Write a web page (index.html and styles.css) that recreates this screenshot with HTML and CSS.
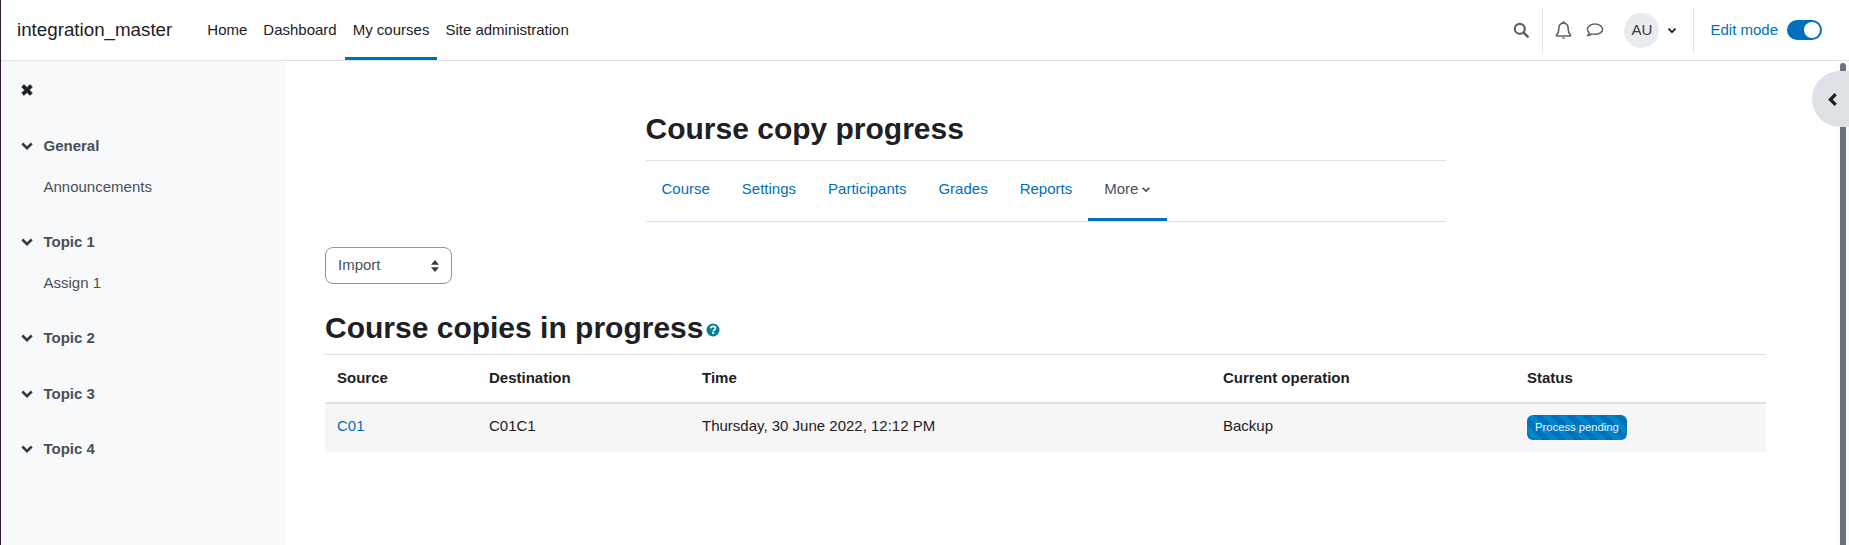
FILE: index.html
```html
<!DOCTYPE html>
<html lang="en">
<head>
<meta charset="utf-8">
<title>Course copy progress</title>
<link rel="stylesheet" href="styles.css">
</head>
<body>
<header class="navbar">
  <a class="brand">integration_master</a>
  <nav class="primary">
    <a class="primary-link">Home</a>
    <a class="primary-link">Dashboard</a>
    <a class="primary-link active">My courses</a>
    <a class="primary-link">Site administration</a>
  </nav>
  <div class="usernav">
    <svg class="ico-search" viewBox="0 0 16 16"><circle cx="6.800" cy="6.800" r="5" fill="none" stroke="currentColor" stroke-width="2.200"/><path d="M10.500 10.500 14.600 14.600" stroke="currentColor" stroke-width="2.600" stroke-linecap="round"/></svg>
    <span class="divider search-div"></span>
    <svg class="ico-bell" viewBox="0 0 16 18"><path d="M8 2.200c-2.800 0-4.400 2-4.400 4.800 0 3.400-.8 4.800-2.200 6.300-.3.4 0 .9.4.9h12.400c.4 0 .7-.5.4-.9-1.400-1.500-2.200-2.900-2.200-6.300C12.400 4.200 10.800 2.200 8 2.200Z" fill="none" stroke="currentColor" stroke-width="1.500"/><path d="M6.200 15.600c.3.900 1 1.300 1.800 1.300s1.500-.4 1.800-1.300Z" fill="currentColor"/><circle cx="8" cy="1.500" r="1.200" fill="currentColor"/></svg>
    <svg class="ico-msg" viewBox="0 0 18 16"><path d="M9 2C4.800 2 1.400 4.300 1.400 7.200c0 1.300.7 2.500 1.800 3.400-.1 1-.7 2-1.600 3 1.700-.1 3.200-.8 4.300-1.700.9.300 2 .4 3.100.4 4.200 0 7.600-2.300 7.600-5.100S13.200 2 9 2Z" fill="none" stroke="currentColor" stroke-width="1.500" stroke-linejoin="round"/></svg>
    <span class="avatar">AU</span>
    <svg class="ico-caret" viewBox="0 0 12 8"><path d="M1.800 1.800 6 6l4.200-4.200" fill="none" stroke="currentColor" stroke-width="2.200"/></svg>
    <span class="divider edit-div"></span>
    <span class="edit-label">Edit mode</span>
    <span class="toggle"><span class="knob"></span></span>
  </div>
</header>

<div class="layout">
  <aside class="sidebar">
    <svg class="ico-close" viewBox="0 0 12 12"><path d="M3 .6 6 3.600 9 .6 11.400 3 8.400 6 11.400 9 9 11.400 6 8.400 3 11.400.6 9 3.600 6 .6 3Z" fill="#1d2125" stroke="#1d2125" stroke-width=".6" stroke-linejoin="round"/></svg>
    <section class="sec sec-first">
      <div class="sec-head"><svg class="chev" viewBox="0 0 12 8"><path d="M1.300 1.500 6 6.200l4.700-4.700" fill="none" stroke="currentColor" stroke-width="2.500"/></svg>General</div>
      <div class="sec-item">Announcements</div>
    </section>
    <section class="sec">
      <div class="sec-head"><svg class="chev" viewBox="0 0 12 8"><path d="M1.300 1.500 6 6.200l4.700-4.700" fill="none" stroke="currentColor" stroke-width="2.500"/></svg>Topic 1</div>
      <div class="sec-item">Assign 1</div>
    </section>
    <section class="sec">
      <div class="sec-head"><svg class="chev" viewBox="0 0 12 8"><path d="M1.300 1.500 6 6.200l4.700-4.700" fill="none" stroke="currentColor" stroke-width="2.500"/></svg>Topic 2</div>
    </section>
    <section class="sec">
      <div class="sec-head"><svg class="chev" viewBox="0 0 12 8"><path d="M1.300 1.500 6 6.200l4.700-4.700" fill="none" stroke="currentColor" stroke-width="2.500"/></svg>Topic 3</div>
    </section>
    <section class="sec">
      <div class="sec-head"><svg class="chev" viewBox="0 0 12 8"><path d="M1.300 1.500 6 6.200l4.700-4.700" fill="none" stroke="currentColor" stroke-width="2.500"/></svg>Topic 4</div>
    </section>
  </aside>

  <main class="main">
    <div class="page-head">
      <h1 class="page-title">Course copy progress</h1>
      <nav class="tabs">
        <a class="tab">Course</a>
        <a class="tab">Settings</a>
        <a class="tab">Participants</a>
        <a class="tab">Grades</a>
        <a class="tab">Reports</a>
        <a class="tab tab-active">More<svg class="tab-caret" viewBox="0 0 12 8"><path d="M2 2l4 4 4-4" fill="none" stroke="currentColor" stroke-width="2"/></svg></a>
      </nav>
    </div>
    <div class="select">Import<svg class="updown" viewBox="0 0 8 12"><path d="M4 0 8 4.800H0ZM4 12 0 7.200h8Z" fill="#343a40"/></svg></div>
    <h2 class="sub-title">Course copies in progress<svg class="help" viewBox="0 0 14 14"><circle cx="7" cy="7" r="6.500" fill="#008196"/><path d="M4.700 5.300C4.900 4 5.900 3.400 7.100 3.400c1.300 0 2.300.8 2.300 2 0 1.700-2.200 1.600-2.200 3" fill="none" stroke="#fff" stroke-width="1.700"/><rect x="6.200" y="9.200" width="2" height="1.800" fill="#fff"/></svg></h2>
    <table class="copies">
      <colgroup>
        <col class="c-source"><col class="c-dest"><col class="c-time"><col class="c-op"><col class="c-status">
      </colgroup>
      <thead>
        <tr><th>Source</th><th>Destination</th><th>Time</th><th>Current operation</th><th>Status</th></tr>
      </thead>
      <tbody>
        <tr><td><a class="link">C01</a></td><td>C01C1</td><td>Thursday, 30 June 2022, 12:12 PM</td><td>Backup</td><td><span class="badge">Process pending</span></td></tr>
      </tbody>
    </table>
  </main>
</div>

<div class="scroll-track"><div class="scrollbar"></div></div>
<div class="drawer-toggle"><svg class="ico-left" viewBox="0 0 10 14"><path d="M8 2 3 7l5 5" fill="none" stroke="#1d2125" stroke-width="3"/></svg></div>
</body>
</html>
```
FILE: styles.css
```css
* { box-sizing: border-box; }
html, body { margin: 0; height: 100%; overflow: hidden; }
body {
  font-family: "Liberation Sans", Arial, sans-serif;
  font-size: 15px;
  line-height: 22.5px;
  color: #1d2125;
  background: #fff;
  border-left: 1px solid #2f1b33;
}
.navbar {
  height: 61px;
  display: flex;
  align-items: center;
  border-bottom: 1px solid #dee2e6;
  padding-left: 16px;
}
.brand { font-size: 18.75px; margin-right: 27px; }
.primary { display: flex; align-self: stretch; }
.primary-link {
  display: flex;
  align-items: center;
  padding: 3px 8px 0;
  height: 60px;
  border-bottom: 3px solid transparent;
}
.primary-link.active { border-bottom-color: #0070bc; }
.usernav { margin-left: auto; display: flex; align-items: center; padding-right: 27px; color: #6a5f58; }
.ico-search { width: 16px; height: 16px; margin-right: 13px; }
.divider { width: 1px; height: 45px; background: #dee2e6; }
.ico-bell { width: 17px; height: 19px; margin: 0 14px 0 12px; }
.ico-msg { width: 18px; height: 16px; margin-right: 20px; }
.avatar {
  width: 35px; height: 35px; border-radius: 50%;
  background: #e9ecef; color: #343a40;
  display: flex; align-items: center; justify-content: center;
}
.ico-caret { width: 10px; height: 7px; margin: 0 16px 0 8px; color: #1d2125; }
.edit-label { color: #0070bc; margin-left: 16px; margin-right: 9px; }
.toggle {
  width: 35px; height: 20px; border-radius: 10px; background: #0070bc;
  display: flex; align-items: center; justify-content: flex-end; padding-right: 2px;
}
.knob { width: 16px; height: 16px; border-radius: 50%; background: #fff; }

.layout { display: flex; height: 484px; }
.sidebar { width: 285px; flex: none; background: #f8f9fa; padding: 21px 20px 0; color: #495057; }
.ico-close { display: block; width: 12px; height: 12px; margin-top: 2px; }
.sec { padding-bottom: 33px; }
.sec-first { margin-top: 39px; }
.sec-head { display: flex; align-items: center; height: 22.5px; font-weight: 700; color: #495057; }
.chev { width: 12px; height: 8px; margin-right: 10.5px; flex: none; color: #343a40; }
.sec-item { margin-top: 18px; margin-left: 22.5px; height: 22.5px; }

.main { flex: 1; padding: 0 83px 0 39px; min-width: 0; }
.page-head { width: 800px; margin: 0 auto; }
.page-title {
  margin: 0;
  font-size: 30px;
  line-height: 36px;
  font-weight: 700;
  padding-top: 50px;
  padding-bottom: 13px;
  border-bottom: 1px solid #dee2e6;
}
.tabs { display: flex; height: 61px; border-bottom: 1px solid #dee2e6; }
.tab { display: flex; align-items: center; padding: 0 16px; color: #0070bc; border-bottom: 3px solid transparent; height: 60px; }
.tab-active { color: #495057; border-bottom-color: #0070bc; }
.tab-caret { width: 10px; height: 7px; margin-left: 3px; }
.select {
  width: 127px; height: 37px; margin-top: 25px;
  display: flex; align-items: center; justify-content: space-between;
  border: 1px solid #8f959e; border-radius: 8px;
  padding: 0 12px;
  color: #495057;
}
.updown { width: 8px; height: 12px; }
.sub-title {
  margin: 27px 0 0;
  font-size: 30px;
  line-height: 34px;
  font-weight: 700;
  display: flex; align-items: center;
  height: 34px;
}
.help { width: 14px; height: 14px; margin-left: 3px; margin-top: 3px; }
.copies { width: 100%; table-layout: fixed; border-collapse: collapse; margin-top: 9px; }
.c-source { width: 152px; }
.c-dest { width: 213px; }
.c-time { width: 521px; }
.c-op { width: 304px; }
.copies th { text-align: left; padding: 0 12px; height: 48px; border-top: 1px solid #dee2e6; border-bottom: 2px solid #dee2e6; font-weight: 700; }
.copies td { padding: 11px 12px 0; height: 49px; background: #f6f6f6; vertical-align: top; }
.link { color: #0070bc; }
.badge {
  display: inline-block;
  padding: 0 8px;
  height: 25px; line-height: 25px;
  font-size: 11.25px;
  color: #eaf4fb;
  border-radius: 6px;
  background: repeating-linear-gradient(45deg, #0070bc 0 5.65px, #0085c8 5.65px 11.3px);
  vertical-align: top;
}
.scroll-track { position: absolute; right: 0; top: 61px; bottom: 0; width: 12px; background: #fbfbfb; }
.scrollbar { position: absolute; right: 3px; top: 2px; bottom: 0; width: 6px; border-radius: 3px 3px 0 0; background: #6a737b; }
.drawer-toggle {
  position: absolute; left: 1812px; top: 71px;
  width: 70px; height: 56px; border-radius: 28px;
  background: #dee2e6;
  display: flex; align-items: center; padding-left: 15px;
}
.ico-left { width: 11px; height: 15px; }
```
